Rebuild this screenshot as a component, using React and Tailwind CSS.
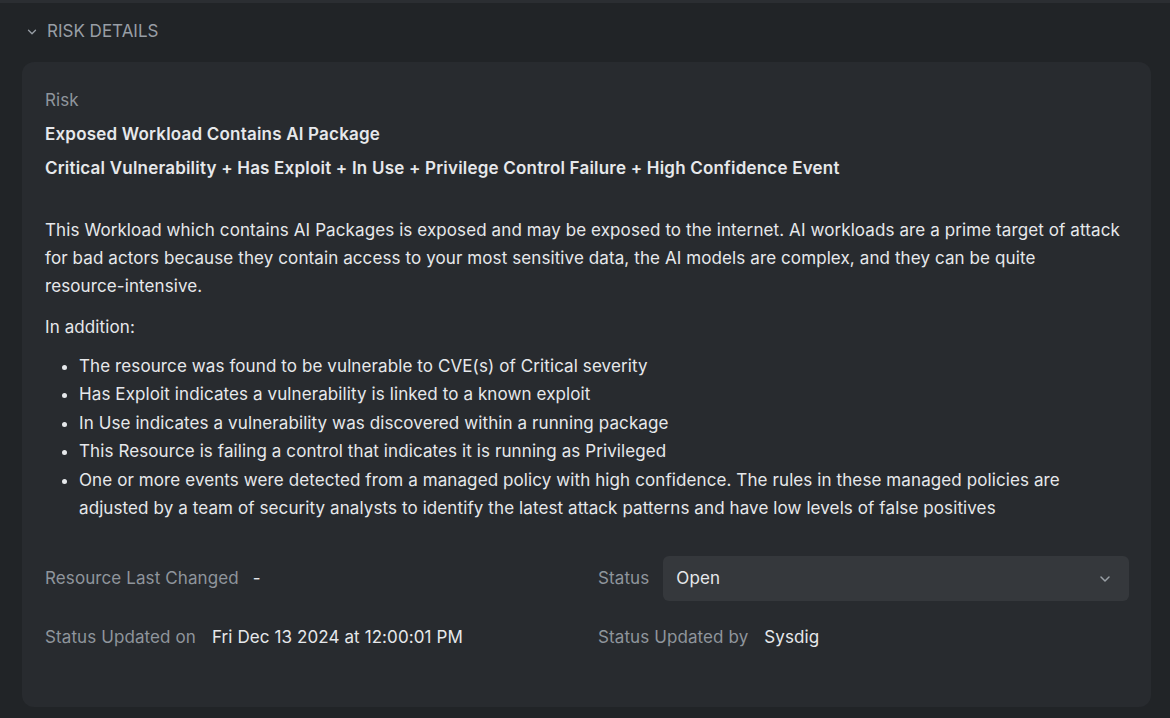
import React from "react";

const bullets = [
  "The resource was found to be vulnerable to CVE(s) of Critical severity",
  "Has Exploit indicates a vulnerability is linked to a known exploit",
  "In Use indicates a vulnerability was discovered within a running package",
  "This Resource is failing a control that indicates it is running as Privileged",
  "One or more events were detected from a managed policy with high confidence. The rules in these managed policies are adjusted by a team of security analysts to identify the latest attack patterns and have low levels of false positives",
];

function Chevron({ className }) {
  return (
    <svg viewBox="0 0 16 16" className={className} fill="none" stroke="currentColor" strokeWidth="1.5" strokeLinecap="round" strokeLinejoin="round">
      <path d="M4 6l4 4 4-4" />
    </svg>
  );
}

export default function App() {
  return (
    <div className="w-[1170px] h-[718px] bg-[#212427] overflow-hidden text-[17px] tracking-[0.1px] text-[#e6e8eb]" style={{ fontFamily: "Inter, 'Noto Sans', sans-serif" }}>
      <div className="h-[3px] bg-[#2b2e32]" />
      <div className="pl-[22px] pr-[19px]">
        <div className="flex items-center h-[57px] pl-[3px] gap-[8px] text-[#989ea5]">
          <Chevron className="w-[14px] h-[14px] mt-[1px]" />
          <span className="tracking-[0px]">RISK DETAILS</span>
        </div>
        <div className="mt-[2px] bg-[#282b2f] rounded-[12px] h-[645px] pl-[23px] pr-[20px] pt-[27px]">
          <div className="text-[#8f959c] leading-[22px]">Risk</div>
          <div className="mt-[12px] font-semibold tracking-[0.2px] leading-[22px]">Exposed Workload Contains AI Package</div>
          <div className="mt-[12px] font-semibold tracking-[0.2px] leading-[22px]">Critical Vulnerability + Has Exploit + In Use + Privilege Control Failure + High Confidence Event</div>
          <p className="mt-[37px] leading-[28px]">
            This Workload which contains AI Packages is exposed and may be exposed to the internet. AI workloads are a prime target of attack for bad actors because they contain access to your most sensitive data, the AI models are complex, and they can be quite <span className="whitespace-nowrap">resource-intensive.</span>
          </p>
          <p className="mt-[13px] leading-[28px]">In addition:</p>
          <ul className="mt-[11px] pl-[34px] list-disc leading-[28.4px]">
            {bullets.map((b) => (
              <li key={b}>{b}</li>
            ))}
          </ul>
          <div className="mt-[34px] grid grid-cols-2 gap-x-[22px] pr-[2px]">
            <div className="flex items-center h-[45px] gap-[14px]">
              <span className="text-[#8f959c]">Resource Last Changed</span>
              <span>-</span>
            </div>
            <div className="flex items-center h-[45px] gap-[14px]">
              <span className="text-[#8f959c]">Status</span>
              <div className="flex-1 h-[45px] bg-[#35383c] rounded-[6px] flex items-center justify-between pl-[13px] pr-[16px]">
                <span>Open</span>
                <Chevron className="w-[16px] h-[16px] text-[#9aa0a6]" />
              </div>
            </div>
            <div className="flex items-center h-[22px] mt-[25px] gap-[16px]">
              <span className="text-[#8f959c]">Status Updated on</span>
              <span>Fri Dec 13 2024 at 12:00:01 PM</span>
            </div>
            <div className="flex items-center h-[22px] mt-[25px] gap-[16px]">
              <span className="text-[#8f959c]">Status Updated by</span>
              <span>Sysdig</span>
            </div>
          </div>
        </div>
      </div>
    </div>
  );
}
